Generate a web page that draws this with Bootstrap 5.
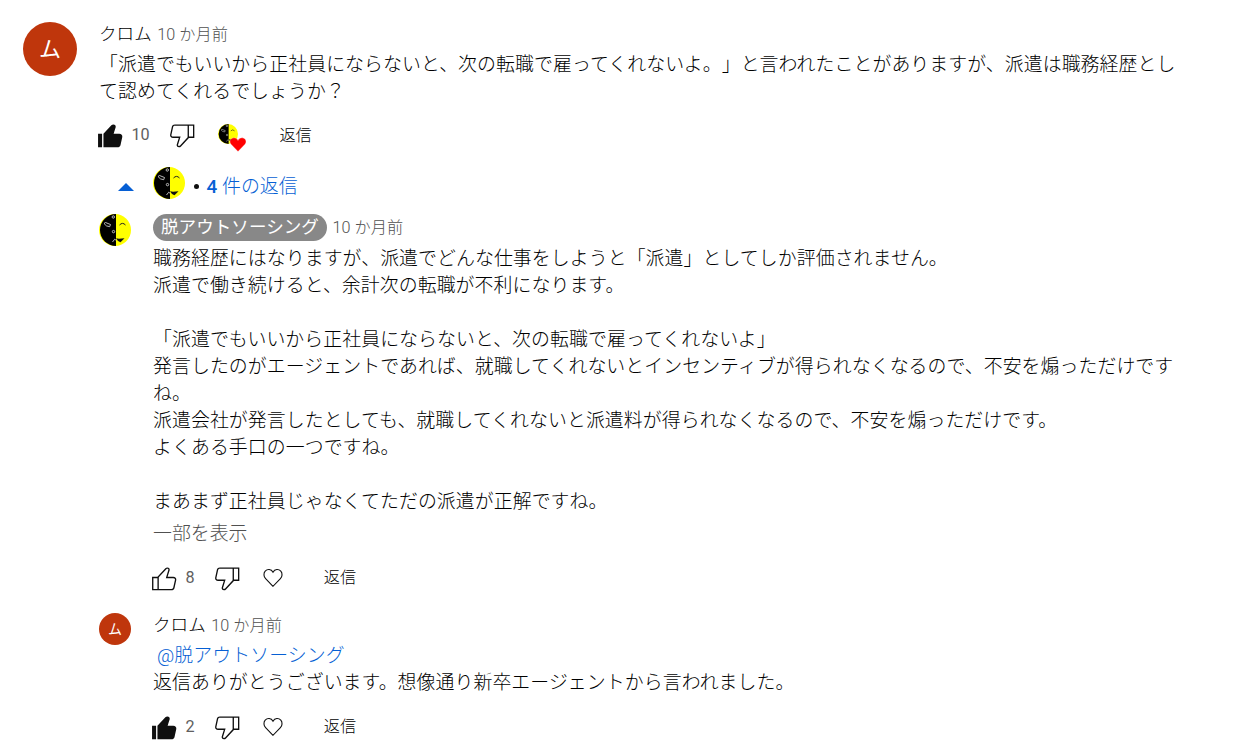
<!DOCTYPE html>
<html lang="ja">
<head>
    <meta charset="UTF-8">
    <meta name="viewport" content="width=device-width, initial-scale=1">
    <title>コメント</title>
    <link href="https://cdn.jsdelivr.net/npm/bootstrap@5.3.0/dist/css/bootstrap.min.css" rel="stylesheet">
    <style>
        body {
            font-family: Roboto, "Noto Sans CJK JP", sans-serif;
            font-size: 18.9px;
            font-weight: 300;
            line-height: 27px;
            color: #000;
            overflow: hidden;
        }
        .thread { padding: 22px 60px 0 23px; gap: 22px; }
        .avatar { width: 54px; height: 54px; background: #bf360c; color: #fff; font-size: 22px; font-weight: 400; }
        .avatar-sm { width: 32px; height: 32px; font-size: 14px; }
        .face { width: 32px; height: 32px; display: block; }
        .head { height: 24px; gap: 5.5px; font-size: 17.55px; line-height: 24px; letter-spacing: .05px; }
        .time { font-size: 16.2px; line-height: 25px; color: #505050; }
        .owner { background: #888; color: #fff; height: 27px; line-height: 26px; padding: 0 8px; font-weight: 400; }
        .owner + .time { line-height: 27px; }
        .comment-text { margin-top: 5px; letter-spacing: .07px; text-spacing-trim: space-all; font-feature-settings: "chws" 0, "halt" 0; }
        .owner-text { margin-top: 7px; }
        .actions { height: 32px; margin-top: 14px; font-size: 16.2px; line-height: 32px; }
        .reply .actions { margin-top: 15px; }
        .thumb { width: 32.4px; height: 32.4px; margin-left: -5px; fill: #0f0f0f; }
        .count { width: 30.6px; padding-left: 5px; font-weight: 400; color: #606060; }
        .count-wide { width: 39.6px; }
        .hearted { width: 28px; height: 28px; margin: 6px 33px 0 20px; }
        .hearted + span { padding-top: 2px; }
        .heart { width: 20px; height: 20px; margin: 0 41px 0 19.4px; fill: none; stroke: #0f0f0f; stroke-width: 1.1; }
        .replies-toggle { height: 32px; margin: 16px 0 15px 19px; color: #065fd4; letter-spacing: .05px; }
        .replies-toggle .face { margin-left: 18.5px; }
        .replies-label { margin-top: 6px; }
        .replies-label b { font-weight: 500; }
        .dot { width: 5px; height: 5px; background: #0f0f0f; margin: 7px 8px 0 9px; }
        .reply { gap: 22px; }
        .reply + .reply { margin-top: 19px; }
        .link { color: #065fd4; }
        .less { color: #505050; margin-top: 5px; }
    </style>
</head>
<body class="bg-white">
    <!-- Общие символы: лица, пальцы, сердца -->
    <svg class="d-none">
        <symbol id="face" viewBox="0 0 32 32">
            <circle cx="16" cy="16" r="16" fill="#ff0"/>
            <path d="M17 0A16 16 0 1 0 17 32Z" fill="#000"/>
            <g fill="none" stroke="#ccc" stroke-width=".9">
                <circle cx="14.3" cy="3" r="1.2"/>
                <path d="M5 9.500l1.500-1 5 2-.8 2.200-3.200-.8z"/>
                <circle cx="14.5" cy="17.6" r="1.2"/>
                <path d="M13.500 28l2.200-2.800 1.300 1"/>
            </g>
            <path d="M20.500 11q3-3.200 6 0" fill="none" stroke="#222" stroke-width="1"/>
            <path d="M17 24.300l3 .5 5.500-.5-4 4-2.500-1.200z" fill="#111"/>
        </symbol>
        <symbol id="like" viewBox="0 0 24 24">
            <path d="M18.77,11h-4.23l1.52-4.94C16.38,5.03,15.54,4,14.38,4c-0.58,0-1.14,0.24-1.52,0.65L7,11H3v10h4h1h9.43c1.06,0,1.98-0.67,2.19-1.61l1.34-6C21.23,12.15,20.18,11,18.77,11z M7,20H4v-8h3V20z M19.98,13.17l-1.34,6C18.54,19.65,18.03,20,17.43,20H8v-8.61l5.6-6.06C13.79,5.12,14.08,5,14.38,5c0.26,0,0.5,0.11,0.63,0.3c0.07,0.1,0.15,0.26,0.09,0.47l-1.52,4.94L13.18,12h1.35h4.23c0.41,0,0.8,0.17,1.03,0.46C19.92,12.61,20.05,12.86,19.98,13.17z"/>
        </symbol>
        <symbol id="liked" viewBox="0 0 24 24">
            <path d="M3,11h3v10H3V11z M18.77,11h-4.23l1.52-4.94C16.38,5.03,15.54,4,14.38,4c-0.58,0-1.14,0.24-1.52,0.65L7,11v10h10.43c1.06,0,1.98-0.67,2.19-1.61l1.34-6C21.23,12.15,20.18,11,18.77,11z"/>
        </symbol>
        <symbol id="dislike" viewBox="0 0 24 24">
            <path d="M17,4h-1H6.57C5.5,4,4.59,4.67,4.38,5.61l-1.34,6C2.77,12.85,3.82,14,5.23,14h4.23l-1.52,4.94C7.62,19.97,8.46,21,9.62,21c0.58,0,1.14-0.24,1.52-0.65L17,14h4V4H17z M10.4,19.67C10.21,19.88,9.92,20,9.62,20c-0.26,0-0.5-0.11-0.63-0.3c-0.07-0.1-0.15-0.26-0.09-0.47l1.52-4.94l0.4-1.29H9.46H5.23c-0.41,0-0.8-0.17-1.03-0.46c-0.12-0.15-0.25-0.4-0.18-0.72l1.34-6C5.46,5.35,5.97,5,6.57,5H16v8.61L10.4,19.67z M20,13h-3V5h3V13z"/>
        </symbol>
        <symbol id="heart" viewBox="0 0 20 20">
            <path d="M10 18.300L2.600 10.700C.6 8.600.4 5.200 2.200 3.200 4.300.8 8.200.9 10 4.200 11.800.9 15.700.8 17.800 3.200 19.600 5.200 19.400 8.600 17.400 10.700Z"/>
        </symbol>
    </svg>

    <div class="thread d-flex align-items-start">
        <div class="avatar rounded-circle d-flex align-items-center justify-content-center flex-shrink-0">ム</div>
        <div class="flex-grow-1">
            <div class="head d-flex">
                <span>クロム</span>
                <span class="time">10 か月前</span>
            </div>
            <div class="comment-text text-nowrap">「派遣でもいいから正社員にならないと、次の転職で雇ってくれないよ。」と言われたことがありますが、派遣は職務経歴とし<br>て認めてくれるでしょうか？</div>
            <div class="actions d-flex align-items-center">
                <svg class="thumb"><use href="#liked"/></svg>
                <span class="count count-wide">10</span>
                <svg class="thumb ms-0"><use href="#dislike"/></svg>
                <svg class="hearted" viewBox="0 0 28 28">
                    <use href="#face" width="20" height="20"/>
                    <path d="M20 27.500L13 20.300C11.200 18.200 12 15 14.300 14.200 16.800 13.200 19.200 14.500 20 16.500 20.800 14.500 23.200 13.200 25.700 14.200 28 15 28.800 18.200 27 20.300Z" fill="#f00" stroke="#fff" stroke-width=".3"/>
                </svg>
                <span>返信</span>
            </div>

            <div class="replies-toggle d-flex align-items-center">
                <svg width="16" height="8" class="mt-2"><path d="M0 8L8 0l8 8z" fill="#065fd4"/></svg>
                <svg class="face"><use href="#face"/></svg>
                <span class="dot rounded-circle"></span>
                <span class="replies-label"><b>4</b> 件の返信</span>
            </div>

            <div class="reply d-flex align-items-start">
                <svg class="face flex-shrink-0"><use href="#face"/></svg>
                <div class="flex-grow-1">
                    <div class="head d-flex">
                        <span class="owner rounded-pill">脱アウトソーシング</span>
                        <span class="time">10 か月前</span>
                    </div>
                    <div class="comment-text owner-text text-nowrap">職務経歴にはなりますが、派遣でどんな仕事をしようと「派遣」としてしか評価されません。<br>派遣で働き続けると、余計次の転職が不利になります。<br><br>「派遣でもいいから正社員にならないと、次の転職で雇ってくれないよ」<br>発言したのがエージェントであれば、就職してくれないとインセンティブが得られなくなるので、不安を煽っただけです<br>ね。<br>派遣会社が発言したとしても、就職してくれないと派遣料が得られなくなるので、不安を煽っただけです。<br>よくある手口の一つですね。<br><br>まあまず正社員じゃなくてただの派遣が正解ですね。</div>
                    <div class="less">一部を表示</div>
                    <div class="actions d-flex align-items-center">
                        <svg class="thumb"><use href="#like"/></svg>
                        <span class="count">8</span>
                        <svg class="thumb ms-0"><use href="#dislike"/></svg>
                        <svg class="heart"><use href="#heart"/></svg>
                        <span>返信</span>
                    </div>
                </div>
            </div>

            <div class="reply d-flex align-items-start">
                <div class="avatar avatar-sm rounded-circle d-flex align-items-center justify-content-center flex-shrink-0">ム</div>
                <div class="flex-grow-1">
                    <div class="head d-flex">
                        <span>クロム</span>
                        <span class="time">10 か月前</span>
                    </div>
                    <div class="comment-text"><span class="link ms-1">@脱アウトソーシング</span><br>返信ありがとうございます。想像通り新卒エージェントから言われました。</div>
                    <div class="actions d-flex align-items-center">
                        <svg class="thumb"><use href="#liked"/></svg>
                        <span class="count">2</span>
                        <svg class="thumb ms-0"><use href="#dislike"/></svg>
                        <svg class="heart"><use href="#heart"/></svg>
                        <span>返信</span>
                    </div>
                </div>
            </div>
        </div>
    </div>
    <script src="https://cdn.jsdelivr.net/npm/bootstrap@5.3.0/dist/js/bootstrap.bundle.min.js"></script>
</body>
</html>
